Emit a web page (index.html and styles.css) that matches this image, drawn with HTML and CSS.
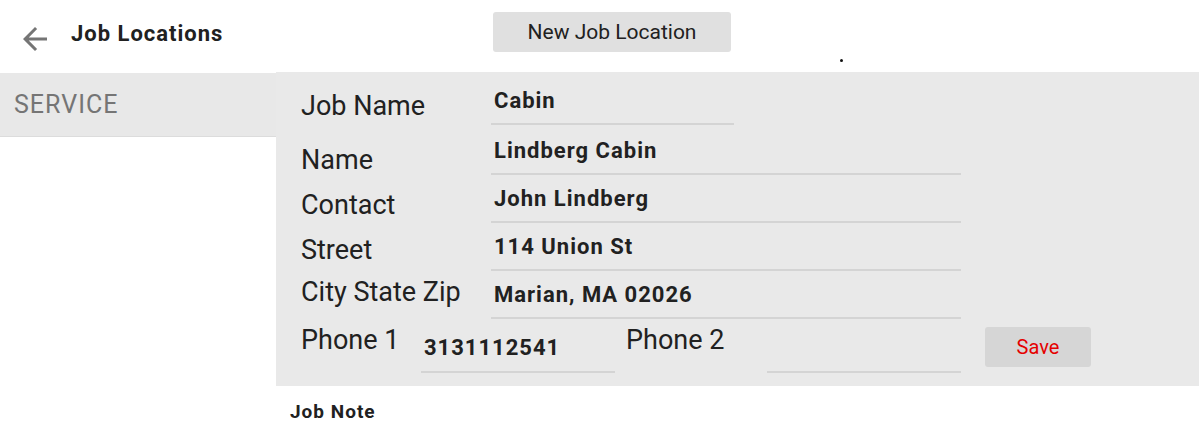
FILE: index.html
```html
<!DOCTYPE html>
<html lang="en">
<head>
    <meta charset="UTF-8">
    <meta name="viewport" content="width=device-width, initial-scale=1.0">
    <title>Job Locations</title>
    <link rel="stylesheet" href="styles.css">
</head>
<body>
    <div class="header">
        <div class="header-left">
            <svg class="back-icon" viewBox="0 0 24 24" width="36" height="36">
                <path d="M20 11H7.83l5.59-5.59L12 4l-8 8 8 8 1.41-1.41L7.83 13H20v-2z" fill="#757575"/>
            </svg>
            <h1 class="title">Job Locations</h1>
        </div>
        <div class="header-right">
            <button class="new-button">New Job Location</button>
            <span class="dot"></span>
        </div>
    </div>
    <div class="main">
        <div class="sidebar">
            <div class="sidebar-item">SERVICE</div>
        </div>
        <div class="content">
            <div class="form-panel">
                <div class="row row-first">
                    <label class="field-label lbl-job">Job Name</label>
                    <div class="field short">Cabin</div>
                </div>
                <div class="row row-second">
                    <label class="field-label lbl-name">Name</label>
                    <div class="field">Lindberg Cabin</div>
                </div>
                <div class="row">
                    <label class="field-label lbl-contact">Contact</label>
                    <div class="field">John Lindberg</div>
                </div>
                <div class="row">
                    <label class="field-label lbl-street">Street</label>
                    <div class="field">114 Union St</div>
                </div>
                <div class="row">
                    <label class="field-label lbl-city">City State Zip</label>
                    <div class="field">Marian, MA 02026</div>
                </div>
                <div class="row row-phone">
                    <label class="field-label phone-label">Phone 1</label>
                    <div class="field phone">3131112541</div>
                    <label class="field-label phone-label phone-two">Phone 2</label>
                    <div class="field phone"></div>
                    <button class="save-button">Save</button>
                </div>
            </div>
            <div class="note-section">
                <div class="note-title">Job Note</div>
            </div>
        </div>
    </div>
</body>
</html>
```

FILE: styles.css
```css
body {
    margin: 0;
    font-family: Roboto, "Noto Sans", Arial, sans-serif;
    color: #212121;
    background-color: #fff;
    height: 431px;
    overflow: hidden;
}
.header {
    display: flex;
    height: 72px;
}
.header-left {
    width: 276px;
    display: flex;
    align-items: flex-start;
    padding-left: 17px;
    box-sizing: border-box;
}
.back-icon {
    margin-top: 21px;
    flex-shrink: 0;
}
.title {
    margin: 21px 0 0 18px;
    font-size: 22px;
    line-height: 26px;
    font-weight: bold;
    letter-spacing: 1px;
    color: #212121;
}
.header-right {
    flex: 1;
    display: flex;
    align-items: flex-start;
}
.new-button {
    margin: 12px 0 0 217px;
    width: 238px;
    height: 40px;
    border: none;
    border-radius: 3px;
    background-color: #e0e0e0;
    font-family: Roboto, sans-serif;
    font-size: 21px;
    color: #212121;
    cursor: pointer;
}
.dot {
    width: 3px;
    height: 3px;
    margin: 59px 0 0 109px;
    border-radius: 50%;
    background-color: #111;
}
.main {
    display: flex;
}
.sidebar {
    width: 276px;
    padding-top: 1px;
}
.sidebar-item {
    height: 63px;
    background-color: #e8e8e8;
    border-bottom: 1px solid #dcdcdc;
    padding-left: 14px;
    font-size: 25px;
    letter-spacing: 1px;
    line-height: 63px;
    color: #757575;
}
.content {
    flex: 1;
}
.form-panel {
    background-color: #e9e9e9;
    padding: 5px 0 13px 25px;
}
.row {
    display: flex;
    height: 48px;
}
.row-second {
    height: 50px;
}
.row-phone {
    height: 54px;
}
.field-label {
    width: 190px;
    align-self: flex-end;
    font-size: 27px;
    line-height: 32px;
    color: #212121;
}
.lbl-job { padding-bottom: 3px; }
.lbl-name { margin-bottom: -1px; }
.lbl-contact { padding-bottom: 2px; }
.lbl-street { padding-bottom: 5px; }
.lbl-city { padding-bottom: 11px; }
.field {
    width: 470px;
    height: 48px;
    box-sizing: border-box;
    align-self: flex-end;
    display: flex;
    align-items: flex-end;
    padding: 0 0 10px 3px;
    border-bottom: 2px solid #d4d4d4;
    font-size: 22px;
    line-height: 24px;
    font-weight: bold;
    letter-spacing: 1px;
}
.field.short {
    width: 243px;
}
.phone-label {
    width: 120px;
    padding-bottom: 17px;
}
.phone-label.phone-two {
    width: 141px;
    margin-left: 11px;
}
.field.phone {
    width: 194px;
    padding-bottom: 11px;
}
.save-button {
    align-self: flex-end;
    margin: 0 0 6px 24px;
    width: 106px;
    height: 40px;
    border: none;
    border-radius: 3px;
    background-color: #d6d6d6;
    color: #e50000;
    font-family: Roboto, sans-serif;
    font-size: 20px;
    cursor: pointer;
}
.note-section {
    padding: 14px 0 0 14px;
}
.note-title {
    font-size: 19px;
    line-height: 24px;
    font-weight: bold;
    letter-spacing: 1px;
}
```
